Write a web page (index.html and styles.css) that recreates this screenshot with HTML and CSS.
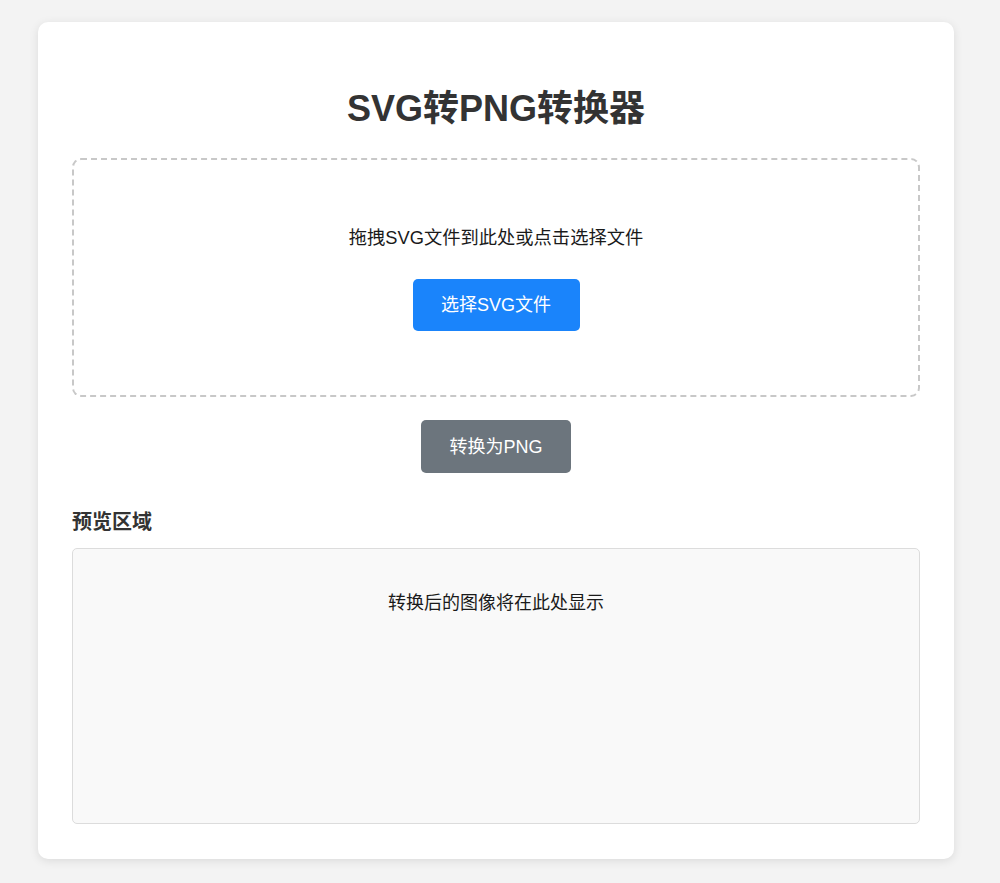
FILE: index.html
```html
<!DOCTYPE html>
<html lang="zh-CN">
<head>
<meta charset="utf-8">
<title>SVG转PNG转换器</title>
<link rel="stylesheet" href="styles.css">
</head>
<body>
<div class="card">
  <h1 class="title">SVG转PNG转换器</h1>
  <div class="dropzone">
    <p class="drop-text">拖拽SVG文件到此处或点击选择文件</p>
    <button class="btn btn-primary">选择SVG文件</button>
  </div>
  <div class="convert-row">
    <button class="btn btn-secondary">转换为PNG</button>
  </div>
  <h3 class="section-title">预览区域</h3>
  <div class="preview">
    <p class="preview-text">转换后的图像将在此处显示</p>
  </div>
</div>
</body>
</html>
```
FILE: styles.css
```css
* { box-sizing: border-box; }
html, body { margin: 0; padding: 0; }
body {
  background: #f3f3f3;
  font-family: "Liberation Sans", "Noto Sans CJK SC", sans-serif;
  color: #222;
  padding: 22px 0 24px 38px;
}
.card {
  width: 916px;
  background: #fff;
  border-radius: 10px;
  box-shadow: 0 2px 10px rgba(0, 0, 0, 0.1);
  padding: 34px 34px 35px;
}
.title {
  margin: 31px 0 28px;
  text-align: center;
  font-size: 36px;
  line-height: 43px;
  font-weight: 700;
  color: #333;
}
.dropzone {
  border: 2px dashed #c8c8c8;
  border-radius: 9px;
  padding: 64px 20px 64px;
  display: flex;
  flex-direction: column;
  align-items: center;
}
.drop-text {
  margin: 0 0 28px;
  font-size: 18.3px;
  line-height: 27px;
  color: #1a1a1a;
}
.btn {
  font-family: inherit;
  font-size: 18px;
  line-height: 26px;
  border: none;
  border-radius: 5px;
  color: #fff;
  cursor: pointer;
}
.btn-primary {
  background: #1a84fb;
  padding: 13px 20px;
  height: 52px;
  width: 167px;
}
.convert-row {
  display: flex;
  justify-content: center;
  margin-top: 23px;
}
.btn-secondary {
  background: #6c757d;
  height: 53px;
  width: 150px;
  padding: 13px 20px;
}
.section-title {
  margin: 35px 0 12px;
  font-size: 20px;
  line-height: 28px;
  font-weight: 700;
  color: #333;
}
.preview {
  background: #f9f9f9;
  border: 1px solid #dcdcdc;
  border-radius: 5px;
  height: 276px;
  padding-top: 41px;
  text-align: center;
}
.preview-text {
  margin: 0;
  font-size: 18px;
  line-height: 27px;
  color: #1a1a1a;
}
```
